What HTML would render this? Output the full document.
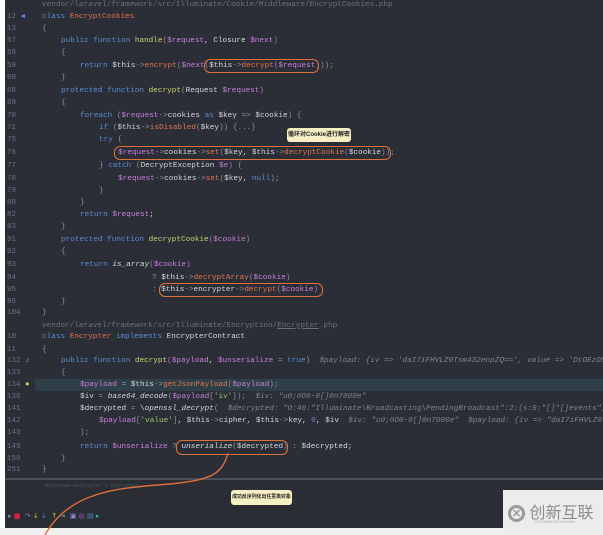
<!DOCTYPE html>
<html><head><meta charset="utf-8"><style>
body{margin:0;width:603px;height:535px;background:#fff;position:relative;overflow:hidden;font-family:"Liberation Mono",monospace;}
#clip{position:absolute;left:0;top:0;width:603px;height:535px;overflow:hidden;}
#ed{position:absolute;left:5px;top:0;width:598px;height:478px;background:#2b2e37;}
#panel{position:absolute;left:5px;top:478px;width:598px;height:50px;background:#2a2d34;border-top:2px solid #4a4e58;}
.l{position:absolute;left:0;font-size:7.7px;line-height:12px;white-space:pre;color:#d4d6dc;}
.n{position:absolute;left:7px;font-size:7.5px;color:#6c7180;line-height:12px;white-space:pre;}
.k{color:#5d8ad0}.c{color:#e2704c}.f{color:#c9d36d}.v{color:#c77edb}.m{color:#e0744d}.g{color:#7c8392;font-style:italic}.p{color:#8a8f9b}.s{color:#9bc46c}.it{font-style:italic}
.box{position:absolute;border:1.3px solid #e0703a;border-radius:6px;}
.call{position:absolute;background:#f6efc3;color:#222;font-family:"Liberation Sans","Noto Sans CJK SC",sans-serif;font-weight:bold;border-radius:3px;text-align:center;white-space:nowrap;}
</style></head><body><div id="clip">
<div id="ed">
<div style="position:absolute;left:30px;top:379px;width:568px;height:12px;background:#2f3f47"></div>
</div>
<div id="panel">
<div style="position:absolute;left:40px;top:3px;font-size:5px;color:#50555f">MiddlewareEncrypter &gt; Encrypter</div>
</div>
<div style="position:absolute;left:0;top:0;width:5px;height:535px;background:#fff"></div>
<div style="position:absolute;left:0;top:528px;width:603px;height:7px;background:#f0f0f0"></div>
<div style="position:absolute;left:503px;top:490px;width:100px;height:45px;background:#ececec"></div>
<div style="position:absolute;left:508px;top:499px;font-family:'Liberation Sans','Noto Sans CJK SC',sans-serif;font-size:16px;color:#8c8c8c;white-space:nowrap"><span style="display:inline-block;width:17px;height:17px;border:3px solid #9a9a9a;border-radius:50%;vertical-align:middle;text-align:center;line-height:12px;font-size:11px;font-weight:bold;color:#9a9a9a;box-sizing:border-box">✕</span> 创新互联</div>
<div style="position:absolute;left:535px;top:519px;font-family:'Liberation Sans',sans-serif;font-size:4px;color:#aaa">CHUANGXIN HULIAN</div>
<div style="position:absolute;left:8px;top:512px;font-size:7px;font-family:'DejaVu Sans',sans-serif;white-space:pre"><span style="color:#888">▸ </span><span style="color:#d24">■</span>  <span style="color:#889">↷</span> <span style="color:#db3">↓</span> <span style="color:#48c">↓</span>  <span style="color:#db3">↑</span> <span style="color:#4a8">⇥</span>  <span style="color:#88d">▣</span> <span style="color:#b6d">◎</span> <span style="color:#48c">▤</span> <span style="color:#4a8">▸</span></div>

<div class="l" style="top:-1px;left:42px;color:#6a6f7c">vendor/laravel/framework/src/Illuminate/Cookie/Middleware/EncryptCookies.php</div>
<div class="n" style="top:11px">12 <span style="color:#5d8ad0">◀</span></div><div class="l" style="top:11px;left:42px"><span class="k">class</span> <span class="c">EncryptCookies</span></div>
<div class="n" style="top:23px">13</div><div class="l" style="top:23px;left:42px"><span class="p">{</span></div>
<div class="n" style="top:35px">57</div><div class="l" style="top:35px;left:61px"><span class="k">public function</span> <span class="f">handle</span><span class="p">(</span><span class="v">$request</span>, Closure <span class="v">$next</span><span class="p">)</span></div>
<div class="n" style="top:47px">58</div><div class="l" style="top:47px;left:61px"><span class="p">{</span></div>
<div class="n" style="top:60px">59</div><div class="l" style="top:60px;left:80px"><span class="k">return</span> $this<span class="p">-&gt;</span><span class="m">encrypt</span><span class="p">(</span><span class="v">$next</span><span class="p">(</span>$this<span class="p">-&gt;</span><span class="m">decrypt</span><span class="p">(</span><span class="v">$request</span><span class="p">)));</span></div>
<div class="n" style="top:72px">60</div><div class="l" style="top:72px;left:61px"><span class="p">}</span></div>
<div class="n" style="top:85px">68</div><div class="l" style="top:85px;left:61px"><span class="k">protected function</span> <span class="f">decrypt</span><span class="p">(</span>Request <span class="v">$request</span><span class="p">)</span></div>
<div class="n" style="top:97px">69</div><div class="l" style="top:97px;left:61px"><span class="p">{</span></div>
<div class="n" style="top:110px">70</div><div class="l" style="top:110px;left:80px"><span class="k">foreach</span> <span class="p">(</span><span class="v">$request</span><span class="p">-&gt;</span>cookies <span class="k">as</span> $key <span class="p">=&gt;</span> $cookie<span class="p">) {</span></div>
<div class="n" style="top:122px">71</div><div class="l" style="top:122px;left:99px"><span class="k">if</span> <span class="p">(</span>$this<span class="p">-&gt;</span><span class="m">isDisabled</span><span class="p">(</span>$key<span class="p">)) {...}</span></div>
<div class="n" style="top:134px">75</div><div class="l" style="top:134px;left:99px"><span class="k">try</span> <span class="p">{</span></div>
<div class="n" style="top:147px">76</div><div class="l" style="top:147px;left:118px"><span class="v">$request</span><span class="p">-&gt;</span>cookies<span class="p">-&gt;</span><span class="m">set</span><span class="p">(</span>$key, $this<span class="p">-&gt;</span><span class="m">decryptCookie</span><span class="p">(</span>$cookie<span class="p">));</span></div>
<div class="n" style="top:160px">77</div><div class="l" style="top:160px;left:99px"><span class="p">} </span><span class="k">catch</span> <span class="p">(</span>DecryptException <span class="v">$e</span><span class="p">) {</span></div>
<div class="n" style="top:173px">78</div><div class="l" style="top:173px;left:118px"><span class="v">$request</span><span class="p">-&gt;</span>cookies<span class="p">-&gt;</span><span class="m">set</span><span class="p">(</span>$key, <span class="k">null</span><span class="p">);</span></div>
<div class="n" style="top:185px">79</div><div class="l" style="top:185px;left:99px"><span class="p">}</span></div>
<div class="n" style="top:197px">80</div><div class="l" style="top:197px;left:80px"><span class="p">}</span></div>
<div class="n" style="top:209px">82</div><div class="l" style="top:209px;left:80px"><span class="k">return</span> <span class="v">$request</span>;</div>
<div class="n" style="top:221px">83</div><div class="l" style="top:221px;left:61px"><span class="p">}</span></div>
<div class="n" style="top:234px">91</div><div class="l" style="top:234px;left:61px"><span class="k">protected function</span> <span class="f">decryptCookie</span><span class="p">(</span><span class="v">$cookie</span><span class="p">)</span></div>
<div class="n" style="top:246px">92</div><div class="l" style="top:246px;left:61px"><span class="p">{</span></div>
<div class="n" style="top:259px">93</div><div class="l" style="top:259px;left:80px"><span class="k">return</span> <span class="it">is_array</span><span class="p">(</span><span class="v">$cookie</span><span class="p">)</span></div>
<div class="n" style="top:272px">94</div><div class="l" style="top:272px;left:152px"><span class="p">?</span> $this<span class="p">-&gt;</span><span class="m">decryptArray</span><span class="p">(</span><span class="v">$cookie</span><span class="p">)</span></div>
<div class="n" style="top:284px">95</div><div class="l" style="top:284px;left:152px"><span class="p">:</span> $this<span class="p">-&gt;</span>encrypter<span class="p">-&gt;</span><span class="m">decrypt</span><span class="p">(</span><span class="v">$cookie</span><span class="p">)</span></div>
<div class="n" style="top:296px">96</div><div class="l" style="top:296px;left:61px"><span class="p">}</span></div>
<div class="n" style="top:307px">104</div><div class="l" style="top:307px;left:42px"><span class="p">}</span></div>
<div class="l" style="top:320px;left:42px;color:#6a6f7c">vendor/laravel/framework/src/Illuminate/Encryption/<u>Encrypter</u>.php</div>
<div class="n" style="top:331px">10</div><div class="l" style="top:331px;left:42px"><span class="k">class</span> <span class="c">Encrypter</span> <span class="k">implements</span> EncrypterContract</div>
<div class="n" style="top:344px">11</div><div class="l" style="top:344px;left:42px"><span class="p">{</span></div>
<div class="n" style="top:355px">132 <span style="color:#c9a">♪</span></div><div class="l" style="top:355px;left:61px"><span class="k">public function</span> <span class="f">decrypt</span><span class="p">(</span><span class="v">$payload</span>, <span class="v">$unserialize</span> <span class="p">=</span> <span class="k">true</span><span class="p">)</span>  <span class="g">$payload: {iv =&gt; 'daI7iFHVLZ0Tsm432enpZQ==', value =&gt; 'DtOEzO5</span></div>
<div class="n" style="top:367px">133</div><div class="l" style="top:367px;left:61px"><span class="p">{</span></div>
<div class="n" style="top:379px">134 <span style="color:#c8d040">●</span></div><div class="l" style="top:379px;left:80px"><span class="v">$payload</span> <span class="p">=</span> $this<span class="p">-&gt;</span><span class="m">getJsonPayload</span><span class="p">(</span><span class="v">$payload</span><span class="p">);</span></div>
<div class="n" style="top:391px">136</div><div class="l" style="top:391px;left:80px">$iv <span class="p">=</span> <span class="it">base64_decode</span><span class="p">(</span><span class="v">$payload</span><span class="p">[</span><span class="s">'iv'</span><span class="p">]);</span>  <span class="g">$iv: "u0;0O0-0[]0n7000e"</span></div>
<div class="n" style="top:403px">141</div><div class="l" style="top:403px;left:80px">$decrypted <span class="p">=</span> \<span class="it">openssl_decrypt</span><span class="p">(</span>  <span class="g">$decrypted: "O:40:"Illuminate\Broadcasting\PendingBroadcast":2:{s:9:"[]*[]events";O:</span></div>
<div class="n" style="top:415px">142</div><div class="l" style="top:415px;left:99px"><span class="v">$payload</span><span class="p">[</span><span class="s">'value'</span><span class="p">]</span>, $this<span class="p">-&gt;</span>cipher, $this<span class="p">-&gt;</span>key, <span class="k">0</span>, $iv  <span class="g">$iv: "u0;0O0-0[]0n7000e"  $payload: {iv =&gt; "daI7iFHVLZ0T</span></div>
<div class="n" style="top:427px">143</div><div class="l" style="top:427px;left:80px"><span class="p">);</span></div>
<div class="n" style="top:441px">149</div><div class="l" style="top:441px;left:80px"><span class="k">return</span> <span class="v">$unserialize</span> <span class="p">?</span> <span class="it">unserialize</span><span class="p">(</span>$decrypted<span class="p">)</span> <span class="p">:</span> $decrypted;</div>
<div class="n" style="top:453px">150</div><div class="l" style="top:453px;left:61px"><span class="p">}</span></div>
<div class="n" style="top:464px">251</div><div class="l" style="top:464px;left:42px"><span class="p">}</span></div>

<div class="box" style="left:204px;top:59px;width:113px;height:12px"></div>
<div class="box" style="left:114px;top:146px;width:275px;height:12px"></div>
<div class="box" style="left:159px;top:283px;width:162px;height:12px"></div>
<div class="box" style="left:176px;top:440px;width:110px;height:13px"></div>
<div class="call" style="left:287px;top:128px;width:64px;height:14px;font-size:6px;line-height:14px">循环对Cookie进行解密</div>
<div class="call" style="left:231px;top:490px;width:61px;height:15px;font-size:4.9px;line-height:15px">成功反序列化出任意类对象</div>
<svg style="position:absolute;left:0;top:0" width="603" height="535"><path d="M228 453 C222 475 210 480 170 484 C120 488 70 490 45 535" fill="none" stroke="#e0703a" stroke-width="1.4"/></svg>
</div></body></html>
